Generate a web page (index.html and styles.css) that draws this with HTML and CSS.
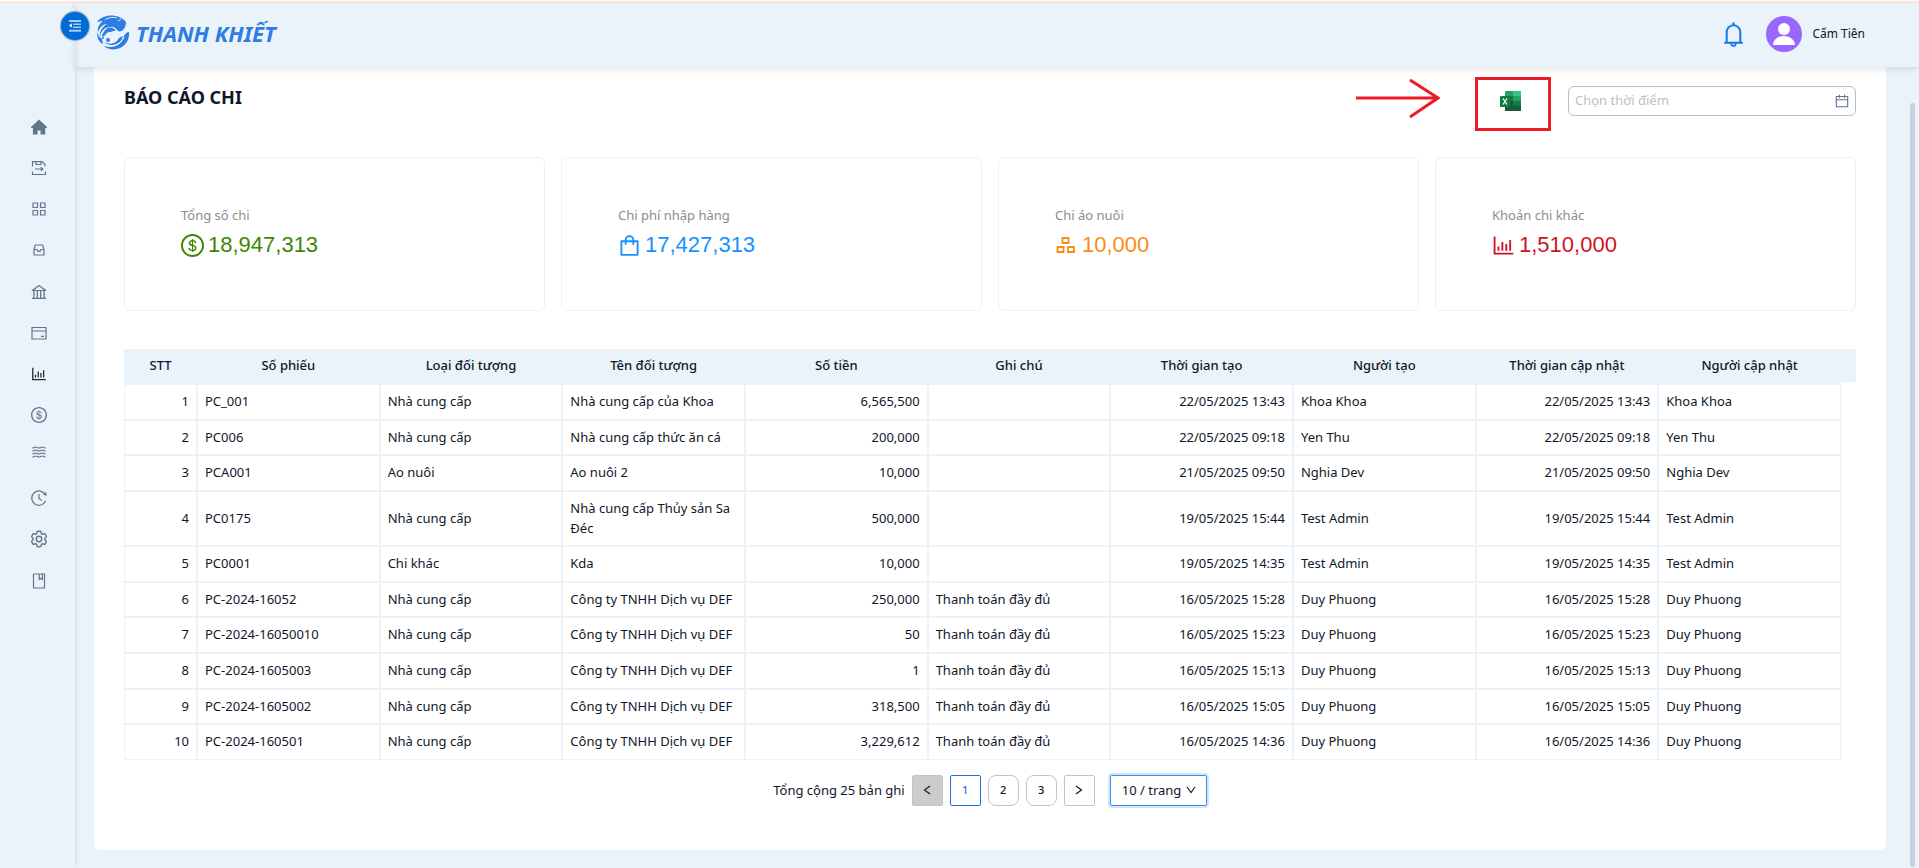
FILE: index.html
```html
<!DOCTYPE html>
<html lang="vi">
<head>
<meta charset="utf-8">
<meta name="viewport" content="width=device-width, initial-scale=1">
<title>Báo cáo chi - Thanh Khiết</title>
<link rel="stylesheet" href="styles.css">
</head>
<body>
<div class="app">
  <aside class="sidebar">
    <nav class="menu" aria-label="Menu">
      <a class="menu-item" href="#" aria-label="Trang chủ"><svg width="16" height="16" viewBox="0 0 16 16"><path fill="currentColor" d="M8 0.4 16 8v1h-1.8v6.4H9.6v-4H6.600v4H1.9V9H0V8z"/></svg></a>
      <a class="menu-item" href="#" aria-label="Phiếu"><svg class="line" width="16" height="16" viewBox="0 0 16 16"><path d="M1.5 6.5V1.7h9.8l2.7 2.8v2M1.5 11.5v3h13v-3M5 2v2.500h5V2M4 9h7.500M9.800 7.300 11.800 9l-2 1.700"/></svg></a>
      <a class="menu-item" href="#" aria-label="Danh mục"><svg class="line" width="14" height="14" viewBox="0 0 14 14"><path d="M1 1h4.500v4.500H1zM8.500 1H13v4.500H8.500zM1 8.500h4.500V13H1zM8.500 8.500H13V13H8.500z"/></svg></a>
      <a class="menu-item" href="#" aria-label="Kho"><svg class="line" width="14" height="14" viewBox="0 0 14 14"><path d="M2 6.500 3.300 2h7.400L12 6.500V12H2zM2 6.500h3l1 1.800h2l1-1.800h3"/></svg></a>
      <a class="menu-item" href="#" aria-label="Ngân hàng"><svg width="16" height="16" viewBox="64 64 896 896"><path fill="currentColor" d="M894 462c30.900 0 43.800-39.700 18.700-58L530.800 126.200a31.810 31.810 0 00-37.600 0L111.300 404c-25.100 18.200-12.200 58 18.800 58H192v374h-72c-4.400 0-8 3.600-8 8v52c0 4.400 3.600 8 8 8h784c4.400 0 8-3.600 8-8v-52c0-4.400-3.600-8-8-8h-72V462h62zM512 196.700l271.100 197.200H240.900L512 196.700zM264 462h117v374H264V462zm189 0h117v374H453V462zm307 374H642V462h118v374z"/></svg></a>
      <a class="menu-item" href="#" aria-label="Thẻ"><svg class="line" width="16" height="14" viewBox="0 0 16 14"><path d="M1 1.500h14v11.500H1zM1 5h14M10 10.300h3"/></svg></a>
      <a class="menu-item active" href="#" aria-label="Báo cáo"><svg width="16" height="16" viewBox="64 64 896 896"><path fill="currentColor" d="M888 792H200V168c0-4.400-3.600-8-8-8h-56c-4.400 0-8 3.600-8 8v688c0 4.400 3.600 8 8 8h752c4.400 0 8-3.600 8-8v-56c0-4.400-3.600-8-8-8zm-600-80h56c4.400 0 8-3.600 8-8V560c0-4.400-3.600-8-8-8h-56c-4.400 0-8 3.600-8 8v144c0 4.400 3.600 8 8 8zm152 0h56c4.400 0 8-3.600 8-8V384c0-4.400-3.600-8-8-8h-56c-4.400 0-8 3.600-8 8v320c0 4.400 3.600 8 8 8zm152 0h56c4.400 0 8-3.600 8-8V462c0-4.400-3.600-8-8-8h-56c-4.400 0-8 3.600-8 8v242c0 4.400 3.600 8 8 8zm152 0h56c4.400 0 8-3.600 8-8V304c0-4.400-3.600-8-8-8h-56c-4.400 0-8 3.600-8 8v400c0 4.400 3.600 8 8 8z"/></svg></a>
      <a class="menu-item" href="#" aria-label="Thu chi"><svg width="16" height="16" viewBox="64 64 896 896"><path fill="currentColor" d="M512 64C264.600 64 64 264.600 64 512s200.600 448 448 448 448-200.600 448-448S759.400 64 512 64zm0 820c-205.400 0-372-166.600-372-372s166.600-372 372-372 372 166.600 372 372-166.600 372-372 372zm47.700-395.200l-25.400-5.900V348.600c38 5.200 61.500 29 65.500 58.200.5 4 3.900 6.900 7.900 6.900h44.900c4.700 0 8.400-4.100 8-8.800-6.100-62.300-57.400-102.300-125.900-109.200V263c0-4.400-3.600-8-8-8h-28.100c-4.400 0-8 3.600-8 8v33c-70.800 6.900-126.200 46-126.200 119 0 67.600 49.800 100.200 102.100 112.700l24.700 6.300v142.700c-44.200-5.900-69-29.500-74.100-61.300-.6-3.800-4-6.600-7.900-6.600H363c-4.700 0-8.400 4-8 8.700 4.500 55 46.200 105.600 135.200 112.100V761c0 4.400 3.600 8 8 8h28.400c4.400 0 8-3.600 8-8.100l-.2-31.700c78.300-6.900 134.300-48.800 134.300-124-.1-69.400-44.200-100.400-109-116.400zm-68.600-16.200c-5.600-1.600-10.300-3.100-15-5-33.800-12.200-49.500-31.900-49.500-57.300 0-36.300 27.500-57 64.500-61.700v124zM534.300 677V543.300c3.100.9 5.900 1.600 8.800 2.200 47.300 14.400 63.200 34.400 63.200 65.100 0 39.100-29.400 62.600-72 66.400z"/></svg></a>
      <a class="menu-item raised" href="#" aria-label="Ao nuôi"><svg class="line" width="14" height="12" viewBox="0 0 14 12"><path d="M0.500 2c1.500 0 1.500-1 3-1s2 1 3.500 1 2-1 3.500-1 1.500 1 3 1M0.500 5c1.500 0 1.500-1 3-1s2 1 3.500 1 2-1 3.500-1 1.500 1 3 1M0.500 8c1.500 0 1.500-1 3-1s2 1 3.500 1 2-1 3.500-1 1.500 1 3 1M0.500 11c1.500 0 1.500-1 3-1s2 1 3.500 1 2-1 3.500-1 1.500 1 3 1"/></svg></a>
      <a class="menu-item" href="#" aria-label="Lịch sử"><svg class="line" width="16" height="16" viewBox="0 0 16 16"><path d="M14.300 4.800A7.200 7.200 0 1 0 14.600 10.800M8 4v4.500l2.800 2"/><path fill="currentColor" stroke="none" d="M12 4.800 15.800 5.800 15 2z"/></svg></a>
      <a class="menu-item" href="#" aria-label="Cài đặt"><svg class="line gear" width="18" height="18" viewBox="1.500 1.500 21 21"><path d="M9.594 3.940c.09-.542.56-.94 1.110-.94h2.593c.55 0 1.020.398 1.110.94l.213 1.281c.063.374.313.686.645.87.074.04.147.083.22.127.325.196.72.257 1.075.124l1.217-.456a1.125 1.125 0 0 1 1.370.49l1.296 2.247a1.125 1.125 0 0 1-.26 1.431l-1.003.827c-.293.241-.438.613-.43.992a7.723 7.723 0 0 1 0 .255c-.008.378.137.75.43.991l1.004.827c.424.35.534.955.26 1.430l-1.298 2.247a1.125 1.125 0 0 1-1.369.491l-1.217-.456c-.355-.133-.75-.072-1.076.124a6.470 6.470 0 0 1-.22.128c-.331.183-.581.495-.644.869l-.213 1.281c-.09.543-.56.94-1.110.94h-2.594c-.55 0-1.019-.398-1.110-.94l-.213-1.281c-.062-.374-.312-.686-.644-.87a6.520 6.520 0 0 1-.22-.127c-.325-.196-.72-.257-1.076-.124l-1.217.456a1.125 1.125 0 0 1-1.369-.49l-1.297-2.247a1.125 1.125 0 0 1 .26-1.431l1.004-.827c.292-.24.437-.613.43-.991a6.932 6.932 0 0 1 0-.255c.007-.38-.138-.751-.43-.992l-1.004-.827a1.125 1.125 0 0 1-.26-1.430l1.297-2.247a1.125 1.125 0 0 1 1.370-.491l1.216.456c.356.133.751.072 1.076-.124.072-.044.146-.086.22-.128.332-.183.582-.495.644-.869l.214-1.280Z"/><circle cx="12" cy="12" r="3.200"/></svg></a>
      <a class="menu-item" href="#" aria-label="Hướng dẫn"><svg class="line" width="14" height="16" viewBox="0 0 14 16"><path d="M1.500 1h11v14h-11zM7.300 1v5.500l1.500-1 1.500 1V1"/></svg></a>
    </nav>
    <button class="toggle" type="button" aria-label="Thu gọn menu"><svg width="12" height="12" viewBox="0 0 12 12"><g fill="#fff" opacity=".65"><path d="M0 0h12v2H0zM4 3.500h8v1.500H4zM4 6.500h8V8H4zM0 9.700h12v2H0z"/></g><path fill="#fff" d="M2.800 3.300v4.400L0 5.500z"/></svg></button>
  </aside>

  <div class="page">
    <header class="topbar">
      <a class="brand" href="#">
        <svg width="34" height="35" viewBox="0 0 34 35" aria-hidden="true"><g fill="#2d7de2"><path d="M1 7C7-1 22-2 30 7c0 3-1 6-3 8-1 1-3 2-5 1-2-3-5-5-8-4-4 0-7 2-9 6l-1 4c-1-5 2-10 7-13-4 0-7 3-9 8-1-4 1-8 5-11-3 0-4 1-6 1z"/><path d="M9 15c4-4 9-3 11 1-3-1-5 2-8 1l-3 3c-1 2-3 2-3 0zM33 17c1 8-4 15-12 17-5 1-10 0-13-3 12 3 18-2 20-10 1-2 3-4 5-4zM8 27c6 3 12 2 15-4l4-2c-2 9-12 12-19 6zM1 17c0 6 2 10 6 12l-1-5c-3-2-4-4-5-7z"/><circle cx="7" cy="23" r="1"/><circle cx="12" cy="25" r="2"/><circle cx="8" cy="19" r="1"/></g><path d="M22 6l3-2M9 5c4-3 9-3 12-2M10 30c8 2 15-1 18-8" fill="none" stroke="#eaf3f9"/></svg>
        <span class="brand-name">THANH KHIẾT</span>
      </a>
      <div class="account">
        <button class="bell" type="button" aria-label="Thông báo"><svg width="25" height="25" viewBox="64 64 896 896"><path fill="currentColor" d="M816 768h-24V428c0-141.100-104.300-257.700-240-277.100V112c0-22.100-17.900-40-40-40s-40 17.900-40 40v38.900c-135.700 19.400-240 136-240 277.100v340h-24c-17.700 0-32 14.300-32 32v32c0 4.400 3.600 8 8 8h216c0 61.800 50.200 112 112 112s112-50.200 112-112h216c4.400 0 8-3.600 8-8v-32c0-17.700-14.300-32-32-32zM512 888c-26.500 0-48-21.500-48-48h96c0 26.500-21.500 48-48 48zM304 768V428c0-55.600 21.600-107.800 60.900-147.100S456.400 220 512 220c55.600 0 107.800 21.600 147.100 60.900S720 372.400 720 428v340H304z"/></svg></button>
        <svg class="avatar" width="36" height="36" viewBox="0 0 36 36" aria-hidden="true"><circle cx="18" cy="18" r="18" fill="#9966ff"/><circle cx="18" cy="13" r="6" fill="#fff"/><path fill="#fff" d="M7 29c0-5 5-9 11-9s11 4 11 9z"/></svg>
        <span class="user-name">Cẩm Tiên</span>
      </div>
    </header>

    <main class="panel">
      <div class="toolbar">
        <h1 class="title">BÁO CÁO CHI</h1>
        <svg class="arrow" width="84" height="42" viewBox="0 0 84 42" aria-hidden="true"><path d="M0 21h82M54 3l28 18-28 19" fill="none" stroke="#ed1c24" stroke-width="3"/></svg>
        <div class="highlight">
          <button class="export" type="button" aria-label="Xuất Excel"><svg width="21" height="20" viewBox="0 0 21 20"><rect x="5" width="16" height="20" rx="1" fill="#21a366"/><path d="M13 0h7a1 1 0 0 1 1 1v4h-8z" fill="#33c481"/><path d="M5 5h8v5H5z" fill="#107c41"/><path d="M13 5h8v5h-8z" fill="#21a366"/><path d="M5 10h8v5H5z" fill="#185c37"/><path d="M13 10h8v5h-8z" fill="#107c41"/><path d="M5 15h16v4a1 1 0 0 1-1 1H6a1 1 0 0 1-1-1z" fill="#185c37"/><rect y="5" width="10" height="11" rx="1" fill="#107c41"/><path d="M3 7.500 7 13.500M7 7.500 3 13.500" stroke="#fff" stroke-width="1.300"/></svg></button>
        </div>
        <label class="date-field">
          <input type="text" placeholder="Chọn thời điểm" aria-label="Chọn thời điểm">
          <svg width="14" height="14" viewBox="64 64 896 896" aria-hidden="true"><path fill="currentColor" d="M880 184H712v-64c0-4.400-3.600-8-8-8h-56c-4.400 0-8 3.600-8 8v64H384v-64c0-4.400-3.600-8-8-8h-56c-4.400 0-8 3.600-8 8v64H144c-17.700 0-32 14.300-32 32v664c0 17.700 14.300 32 32 32h736c17.700 0 32-14.300 32-32V216c0-17.700-14.300-32-32-32zm-40 656H184V460h656v380zM184 392V256h128v48c0 4.400 3.600 8 8 8h56c4.400 0 8-3.600 8-8v-48h256v48c0 4.400 3.600 8 8 8h56c4.400 0 8-3.600 8-8v-48h128v136H184z"/></svg>
        </label>
      </div>

      <section class="stats">
        <div class="stat green">
          <div class="stat-label">Tổng số chi</div>
          <div class="stat-value"><svg width="23" height="23" viewBox="64 64 896 896"><path fill="currentColor" d="M512 64C264.600 64 64 264.600 64 512s200.600 448 448 448 448-200.600 448-448S759.400 64 512 64zm0 820c-205.400 0-372-166.600-372-372s166.600-372 372-372 372 166.600 372 372-166.600 372-372 372zm47.700-395.200l-25.400-5.900V348.600c38 5.200 61.500 29 65.500 58.200.5 4 3.900 6.900 7.900 6.900h44.900c4.700 0 8.400-4.100 8-8.800-6.100-62.300-57.400-102.300-125.900-109.200V263c0-4.400-3.600-8-8-8h-28.100c-4.400 0-8 3.600-8 8v33c-70.800 6.900-126.200 46-126.200 119 0 67.600 49.800 100.200 102.100 112.700l24.700 6.300v142.700c-44.200-5.900-69-29.500-74.100-61.300-.6-3.800-4-6.600-7.900-6.600H363c-4.700 0-8.400 4-8 8.700 4.500 55 46.200 105.600 135.200 112.100V761c0 4.400 3.600 8 8 8h28.400c4.400 0 8-3.600 8-8.100l-.2-31.700c78.300-6.900 134.300-48.800 134.300-124-.1-69.400-44.200-100.400-109-116.400zm-68.600-16.200c-5.600-1.600-10.300-3.100-15-5-33.800-12.200-49.500-31.900-49.500-57.300 0-36.300 27.500-57 64.500-61.700v124zM534.300 677V543.300c3.100.9 5.900 1.600 8.800 2.200 47.300 14.400 63.200 34.400 63.200 65.100 0 39.100-29.400 62.600-72 66.400z"/></svg><span>18,947,313</span></div>
        </div>
        <div class="stat blue">
          <div class="stat-label">Chi phí nhập hàng</div>
          <div class="stat-value"><svg width="23" height="23" viewBox="64 64 896 896"><path fill="currentColor" d="M832 312H696v-16c0-101.600-82.400-184-184-184s-184 82.400-184 184v16H192c-17.700 0-32 14.300-32 32v536c0 17.700 14.300 32 32 32h640c17.700 0 32-14.300 32-32V344c0-17.700-14.300-32-32-32zm-432-16c0-61.900 50.100-112 112-112s112 50.100 112 112v16H400v-16zm392 544H232V384h96v88c0 4.400 3.600 8 8 8h56c4.400 0 8-3.600 8-8v-88h224v88c0 4.400 3.600 8 8 8h56c4.400 0 8-3.600 8-8v-88h96v456z"/></svg><span>17,427,313</span></div>
        </div>
        <div class="stat orange">
          <div class="stat-label">Chi áo nuôi</div>
          <div class="stat-value"><svg width="23" height="23" viewBox="0 0 23 23"><path d="M7.500 4h6v5h-6zM2.500 13h6v5h-6zM13 13h6v5h-6z" fill="none" stroke="currentColor" stroke-width="1.800"/></svg><span>10,000</span></div>
        </div>
        <div class="stat red">
          <div class="stat-label">Khoản chi khác</div>
          <div class="stat-value"><svg width="23" height="23" viewBox="64 64 896 896"><path fill="currentColor" d="M888 792H200V168c0-4.400-3.600-8-8-8h-56c-4.400 0-8 3.600-8 8v688c0 4.400 3.600 8 8 8h752c4.400 0 8-3.600 8-8v-56c0-4.400-3.600-8-8-8zm-600-80h56c4.400 0 8-3.600 8-8V560c0-4.400-3.600-8-8-8h-56c-4.400 0-8 3.600-8 8v144c0 4.400 3.600 8 8 8zm152 0h56c4.400 0 8-3.600 8-8V384c0-4.400-3.600-8-8-8h-56c-4.400 0-8 3.600-8 8v320c0 4.400 3.600 8 8 8zm152 0h56c4.400 0 8-3.600 8-8V462c0-4.400-3.600-8-8-8h-56c-4.400 0-8 3.600-8 8v242c0 4.400 3.600 8 8 8zm152 0h56c4.400 0 8-3.600 8-8V304c0-4.400-3.600-8-8-8h-56c-4.400 0-8 3.600-8 8v400c0 4.400 3.600 8 8 8z"/></svg><span>1,510,000</span></div>
        </div>
      </section>

      <table class="report">
        <colgroup><col class="col-index"><col><col><col><col><col><col><col><col><col><col class="col-scroll"></colgroup>
        <thead>
          <tr><th>STT</th><th>Số phiếu</th><th>Loại đối tượng</th><th>Tên đối tượng</th><th>Số tiền</th><th>Ghi chú</th><th>Thời gian tạo</th><th>Người tạo</th><th>Thời gian cập nhật</th><th>Người cập nhật</th><td class="scroll-cell"></td></tr>
        </thead>
        <tbody>
          <tr><td class="num">1</td><td>PC_001</td><td>Nhà cung cấp</td><td>Nhà cung cấp của Khoa</td><td class="num">6,565,500</td><td></td><td class="num">22/05/2025 13:43</td><td>Khoa Khoa</td><td class="num">22/05/2025 13:43</td><td>Khoa Khoa</td></tr>
          <tr><td class="num">2</td><td>PC006</td><td>Nhà cung cấp</td><td>Nhà cung cấp thức ăn cá</td><td class="num">200,000</td><td></td><td class="num">22/05/2025 09:18</td><td>Yen Thu</td><td class="num">22/05/2025 09:18</td><td>Yen Thu</td></tr>
          <tr><td class="num">3</td><td>PCA001</td><td>Ao nuôi</td><td>Ao nuôi 2</td><td class="num">10,000</td><td></td><td class="num">21/05/2025 09:50</td><td>Nghia Dev</td><td class="num">21/05/2025 09:50</td><td>Nghia Dev</td></tr>
          <tr><td class="num">4</td><td>PC0175</td><td>Nhà cung cấp</td><td>Nhà cung cấp Thủy sản Sa Đéc</td><td class="num">500,000</td><td></td><td class="num">19/05/2025 15:44</td><td>Test Admin</td><td class="num">19/05/2025 15:44</td><td>Test Admin</td></tr>
          <tr><td class="num">5</td><td>PC0001</td><td>Chi khác</td><td>Kda</td><td class="num">10,000</td><td></td><td class="num">19/05/2025 14:35</td><td>Test Admin</td><td class="num">19/05/2025 14:35</td><td>Test Admin</td></tr>
          <tr><td class="num">6</td><td>PC-2024-16052</td><td>Nhà cung cấp</td><td>Công ty TNHH Dịch vụ DEF</td><td class="num">250,000</td><td>Thanh toán đầy đủ</td><td class="num">16/05/2025 15:28</td><td>Duy Phuong</td><td class="num">16/05/2025 15:28</td><td>Duy Phuong</td></tr>
          <tr><td class="num">7</td><td>PC-2024-16050010</td><td>Nhà cung cấp</td><td>Công ty TNHH Dịch vụ DEF</td><td class="num">50</td><td>Thanh toán đầy đủ</td><td class="num">16/05/2025 15:23</td><td>Duy Phuong</td><td class="num">16/05/2025 15:23</td><td>Duy Phuong</td></tr>
          <tr><td class="num">8</td><td>PC-2024-1605003</td><td>Nhà cung cấp</td><td>Công ty TNHH Dịch vụ DEF</td><td class="num">1</td><td>Thanh toán đầy đủ</td><td class="num">16/05/2025 15:13</td><td>Duy Phuong</td><td class="num">16/05/2025 15:13</td><td>Duy Phuong</td></tr>
          <tr><td class="num">9</td><td>PC-2024-1605002</td><td>Nhà cung cấp</td><td>Công ty TNHH Dịch vụ DEF</td><td class="num">318,500</td><td>Thanh toán đầy đủ</td><td class="num">16/05/2025 15:05</td><td>Duy Phuong</td><td class="num">16/05/2025 15:05</td><td>Duy Phuong</td></tr>
          <tr><td class="num">10</td><td>PC-2024-160501</td><td>Nhà cung cấp</td><td>Công ty TNHH Dịch vụ DEF</td><td class="num">3,229,612</td><td>Thanh toán đầy đủ</td><td class="num">16/05/2025 14:36</td><td>Duy Phuong</td><td class="num">16/05/2025 14:36</td><td>Duy Phuong</td></tr>
        </tbody>
      </table>

      <nav class="pagination" aria-label="Phân trang">
        <span class="total">Tổng cộng 25 bản ghi</span>
        <button class="step disabled" type="button" disabled aria-label="Trang trước"><svg class="line" width="8" height="10" viewBox="0 0 8 10"><path d="M7 1 1.500 5 7 9"/></svg></button>
        <button class="current" type="button">1</button>
        <button type="button">2</button>
        <button type="button">3</button>
        <button class="step" type="button" aria-label="Trang sau"><svg class="line" width="8" height="10" viewBox="0 0 8 10"><path d="M1 1l5.500 4L1 9"/></svg></button>
        <span class="size-field">
          <select aria-label="Số dòng mỗi trang"><option>10 / trang</option></select>
          <svg class="line" width="10" height="8" viewBox="0 0 10 8" aria-hidden="true"><path d="M1 1l4 5.500L9 1"/></svg>
        </span>
      </nav>
    </main>
  </div>
  <div class="scrollbar" aria-hidden="true"></div>
</div>
</body>
</html>
```
FILE: styles.css
```css
* {
  box-sizing: border-box;
}

body {
  margin: 0;
  background: #eaf3f9;
  color: #0f172a;
  font: 13px/1.51 "Noto Sans", "Open Sans", sans-serif;
}

button {
  margin: 0;
  padding: 0;
  border: 0;
  background: none;
  font: inherit;
  color: inherit;
  cursor: pointer;
}

svg {
  display: block;
  flex: none;
}

.line {
  fill: none;
  stroke: currentColor;
  stroke-width: 1.2;
}

.gear {
  stroke-width: 1.6;
}

.app {
  position: relative;
  display: flex;
  min-height: 100vh;
  border-top: 2px solid #fff8f4;
  box-shadow: inset 0 1px #fbd9d0;
}

.sidebar {
  position: relative;
  z-index: 2;
  flex: none;
  width: 75px;
  padding-top: 104px;
  box-shadow: 2px 0 5px -1px rgba(0, 21, 41, 0.1);
  clip-path: inset(4px -16px 0 0);
}

.menu {
  display: flex;
  flex-direction: column;
  font-size: 16px;
}

.menu-item {
  display: flex;
  align-items: center;
  justify-content: center;
  height: 2.58em;
  padding-left: 3px;
  color: #64748b;
}

.menu-item.active {
  color: #1e293b;
}

.menu-item.raised {
  padding-bottom: 10px;
}

.toggle {
  position: absolute;
  top: 10px;
  right: -14px;
  display: grid;
  place-items: center;
  width: 28px;
  height: 28px;
  border-radius: 50%;
  background: #006dd6;
  box-shadow: 0 0 1px 1px rgba(60, 110, 150, 0.55);
}

.page {
  flex: 1;
  min-width: 0;
}

.topbar {
  position: relative;
  z-index: 1;
  display: flex;
  align-items: flex-start;
  justify-content: space-between;
  height: 65px;
  padding: 12px 54px 0 21px;
  border-top: 1px solid #fbd9d0;
  background: #eaf3f9;
  box-shadow: 0 2px 6px rgba(0, 21, 41, 0.12);
}

.brand {
  display: flex;
  align-items: center;
  gap: 6px;
  color: #2d7de2;
  text-decoration: none;
}

.brand-name {
  font: italic 700 22px/32px "Noto Sans", sans-serif;
}

.account {
  display: flex;
  align-items: center;
  padding-top: 1px;
}

.bell {
  margin-right: 20px;
  color: #1877e8;
}

.avatar {
  margin-right: 10px;
}

.user-name {
  font-size: 12px;
}

.panel {
  margin: 0 33px 15px 19px;
  padding: 10px 30px 44px;
  border-radius: 0 0 6px 6px;
  background: #fff;
}

.toolbar {
  display: flex;
  align-items: flex-start;
}

.title {
  flex: 1;
  margin: 6px 0 0;
  font-size: 18px;
  font-weight: 700;
  line-height: 28px;
}

.arrow {
  margin-right: 35px;
}

.highlight {
  width: 76px;
  height: 54px;
  padding: 11px 0 0 22px;
  border: 3px solid #ed1c24;
}

.date-field {
  display: flex;
  align-items: center;
  width: 288px;
  height: 30px;
  margin: 9px 0 0 17px;
  padding: 0 6px;
  border: 1px solid #b9bdc6;
  border-radius: 6px;
  color: #64748b;
}

.date-field input {
  flex: 1;
  min-width: 0;
  padding: 0;
  border: 0;
  outline: 0;
  background: none;
  font: inherit;
}

.date-field input::placeholder {
  color: #bfbfbf;
}

.stats {
  display: grid;
  grid-template-columns: repeat(4, 1fr);
  gap: 16px;
  margin: 26px 0 38px;
}

.stat {
  padding: 46px 56px 48px;
  border: 1px solid #f0f0f0;
  border-radius: 6px;
}

.stat-label {
  margin-bottom: 2px;
  color: #8c8c8c;
  line-height: 22px;
}

.stat-value {
  display: flex;
  align-items: center;
  gap: 4px;
  font: 22px/34px "Liberation Sans", Arial, sans-serif;
}

.green .stat-value {
  color: #3f8600;
}

.blue .stat-value {
  color: #1890ff;
}

.orange .stat-value {
  color: #fa8c16;
}

.red .stat-value {
  color: #cf1322;
}

.report {
  width: 100%;
  border-spacing: 0;
  table-layout: fixed;
}

.col-index {
  width: 73px;
}

.col-scroll {
  width: 15px;
}

.report th {
  height: 35px;
  padding: 0 8px 2px;
  background: #e9f3f9;
  font-weight: 500;
  text-align: center;
}

.report td {
  padding: 7px;
  border: 1px solid #e9f3f9;
  text-align: left;
}

.report .num {
  text-align: right;
}

.report .scroll-cell {
  padding: 0;
  border: 0;
  background: linear-gradient(#e9f3f9, #e9f3f9) 0 0 / 100% 33px no-repeat;
}

.pagination {
  display: flex;
  align-items: center;
  justify-content: center;
  gap: 7px;
  margin-top: 15px;
}

.pagination button {
  display: grid;
  place-items: center;
  width: 31px;
  height: 31px;
  border: 1px solid #c4c4c8;
  border-radius: 8px;
  font-size: 11px;
  font-weight: 500;
}

.pagination .step {
  border-radius: 2px;
}

.pagination .disabled {
  background: #ccc;
}

.pagination .current {
  border-color: #1d6fdc;
  border-radius: 2px;
  color: #1d6fdc;
}

.size-field {
  position: relative;
  margin-left: 8px;
}

.size-field select {
  display: block;
  width: 97px;
  height: 31px;
  padding: 0 11px;
  border: 1px solid #3b8ce8;
  border-radius: 2px;
  background: #fff;
  box-shadow: 0 0 0 2px #d3e4fb;
  appearance: none;
  color: inherit;
  font: inherit;
}

.size-field svg {
  position: absolute;
  top: 11px;
  right: 11px;
  pointer-events: none;
}

.scrollbar {
  position: absolute;
  top: 101px;
  right: 4px;
  bottom: 1px;
  width: 5px;
  border-radius: 3px;
  background: #c5d3e1;
}
```
